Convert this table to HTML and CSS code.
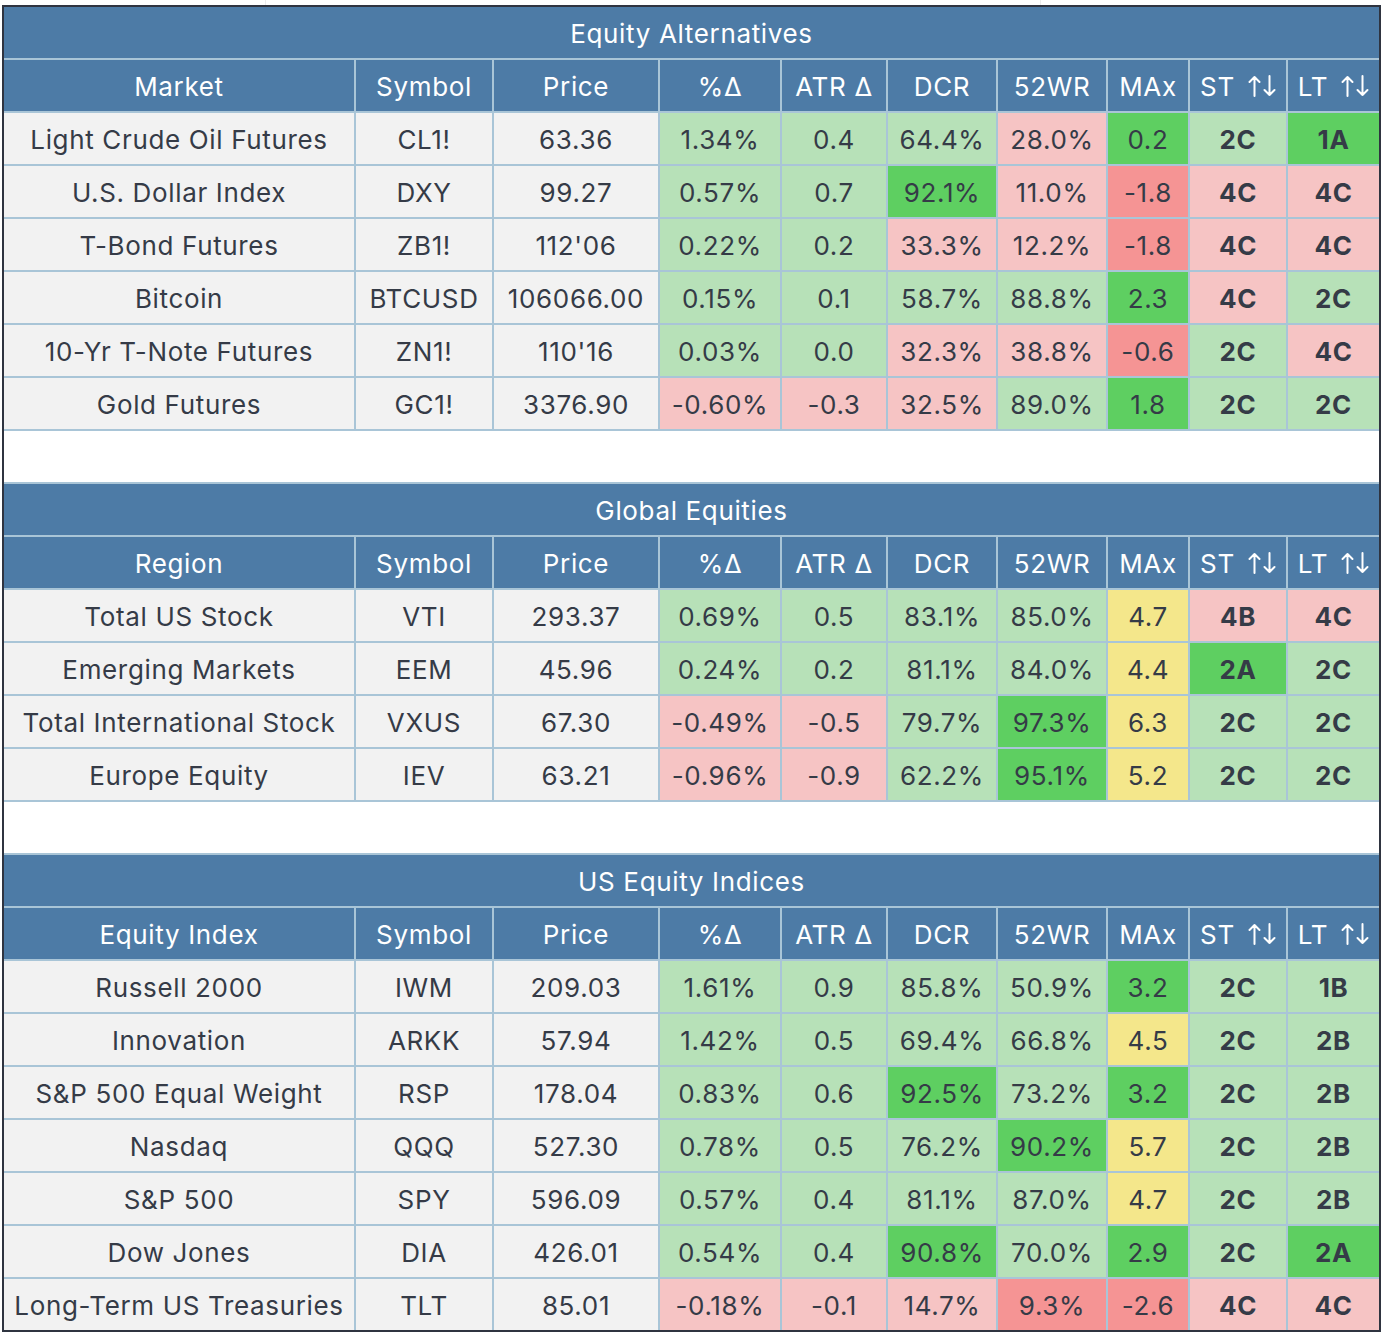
FILE: index.html
```html
<!DOCTYPE html>
<html lang="en">
<head>
<meta charset="utf-8">
<title>Market Dashboard</title>
<link rel="stylesheet" href="styles.css">
</head>
<body>
<div class="board">
  <div class="title">Equity Alternatives</div>
  <div class="th">Market</div><div class="th">Symbol</div><div class="th">Price</div><div class="th">%Δ</div><div class="th">ATR Δ</div><div class="th">DCR</div><div class="th">52WR</div><div class="th">MAx</div><div class="th">ST<svg class="arr" viewBox="0 0 28 22" aria-label="sort"><path d="M6.5 21V2M1.5 7L6.5 2L11.5 7M21.5 1V20M16.5 15L21.5 20L26.5 15"/></svg></div><div class="th last">LT<svg class="arr" viewBox="0 0 28 22" aria-label="sort"><path d="M6.5 21V2M1.5 7L6.5 2L11.5 7M21.5 1V20M16.5 15L21.5 20L26.5 15"/></svg></div>

  <div class="td n">Light Crude Oil Futures</div><div class="td n">CL1!</div><div class="td n">63.36</div><div class="td g">1.34%</div><div class="td g">0.4</div><div class="td g">64.4%</div><div class="td p">28.0%</div><div class="td G">0.2</div><div class="td g b">2C</div><div class="td G b last">1A</div>
  <div class="td n">U.S. Dollar Index</div><div class="td n">DXY</div><div class="td n">99.27</div><div class="td g">0.57%</div><div class="td g">0.7</div><div class="td G">92.1%</div><div class="td p">11.0%</div><div class="td r">-1.8</div><div class="td p b">4C</div><div class="td p b last">4C</div>
  <div class="td n">T-Bond Futures</div><div class="td n">ZB1!</div><div class="td n">112'06</div><div class="td g">0.22%</div><div class="td g">0.2</div><div class="td p">33.3%</div><div class="td p">12.2%</div><div class="td r">-1.8</div><div class="td p b">4C</div><div class="td p b last">4C</div>
  <div class="td n">Bitcoin</div><div class="td n">BTCUSD</div><div class="td n">106066.00</div><div class="td g">0.15%</div><div class="td g">0.1</div><div class="td g">58.7%</div><div class="td g">88.8%</div><div class="td G">2.3</div><div class="td p b">4C</div><div class="td g b last">2C</div>
  <div class="td n">10-Yr T-Note Futures</div><div class="td n">ZN1!</div><div class="td n">110'16</div><div class="td g">0.03%</div><div class="td g">0.0</div><div class="td p">32.3%</div><div class="td p">38.8%</div><div class="td r">-0.6</div><div class="td g b">2C</div><div class="td p b last">4C</div>
  <div class="td n">Gold Futures</div><div class="td n">GC1!</div><div class="td n">3376.90</div><div class="td p">-0.60%</div><div class="td p">-0.3</div><div class="td p">32.5%</div><div class="td g">89.0%</div><div class="td G">1.8</div><div class="td g b">2C</div><div class="td g b last">2C</div>

  <div class="spacer"></div>

  <div class="title">Global Equities</div>
  <div class="th">Region</div><div class="th">Symbol</div><div class="th">Price</div><div class="th">%Δ</div><div class="th">ATR Δ</div><div class="th">DCR</div><div class="th">52WR</div><div class="th">MAx</div><div class="th">ST<svg class="arr" viewBox="0 0 28 22" aria-label="sort"><path d="M6.5 21V2M1.5 7L6.5 2L11.5 7M21.5 1V20M16.5 15L21.5 20L26.5 15"/></svg></div><div class="th last">LT<svg class="arr" viewBox="0 0 28 22" aria-label="sort"><path d="M6.5 21V2M1.5 7L6.5 2L11.5 7M21.5 1V20M16.5 15L21.5 20L26.5 15"/></svg></div>

  <div class="td n">Total US Stock</div><div class="td n">VTI</div><div class="td n">293.37</div><div class="td g">0.69%</div><div class="td g">0.5</div><div class="td g">83.1%</div><div class="td g">85.0%</div><div class="td y">4.7</div><div class="td p b">4B</div><div class="td p b last">4C</div>
  <div class="td n">Emerging Markets</div><div class="td n">EEM</div><div class="td n">45.96</div><div class="td g">0.24%</div><div class="td g">0.2</div><div class="td g">81.1%</div><div class="td g">84.0%</div><div class="td y">4.4</div><div class="td G b">2A</div><div class="td g b last">2C</div>
  <div class="td n">Total International Stock</div><div class="td n">VXUS</div><div class="td n">67.30</div><div class="td p">-0.49%</div><div class="td p">-0.5</div><div class="td g">79.7%</div><div class="td G">97.3%</div><div class="td y">6.3</div><div class="td g b">2C</div><div class="td g b last">2C</div>
  <div class="td n">Europe Equity</div><div class="td n">IEV</div><div class="td n">63.21</div><div class="td p">-0.96%</div><div class="td p">-0.9</div><div class="td g">62.2%</div><div class="td G">95.1%</div><div class="td y">5.2</div><div class="td g b">2C</div><div class="td g b last">2C</div>

  <div class="spacer"></div>

  <div class="title">US Equity Indices</div>
  <div class="th">Equity Index</div><div class="th">Symbol</div><div class="th">Price</div><div class="th">%Δ</div><div class="th">ATR Δ</div><div class="th">DCR</div><div class="th">52WR</div><div class="th">MAx</div><div class="th">ST<svg class="arr" viewBox="0 0 28 22" aria-label="sort"><path d="M6.5 21V2M1.5 7L6.5 2L11.5 7M21.5 1V20M16.5 15L21.5 20L26.5 15"/></svg></div><div class="th last">LT<svg class="arr" viewBox="0 0 28 22" aria-label="sort"><path d="M6.5 21V2M1.5 7L6.5 2L11.5 7M21.5 1V20M16.5 15L21.5 20L26.5 15"/></svg></div>

  <div class="td n">Russell 2000</div><div class="td n">IWM</div><div class="td n">209.03</div><div class="td g">1.61%</div><div class="td g">0.9</div><div class="td g">85.8%</div><div class="td g">50.9%</div><div class="td G">3.2</div><div class="td g b">2C</div><div class="td g b last">1B</div>
  <div class="td n">Innovation</div><div class="td n">ARKK</div><div class="td n">57.94</div><div class="td g">1.42%</div><div class="td g">0.5</div><div class="td g">69.4%</div><div class="td g">66.8%</div><div class="td y">4.5</div><div class="td g b">2C</div><div class="td g b last">2B</div>
  <div class="td n">S&amp;P 500 Equal Weight</div><div class="td n">RSP</div><div class="td n">178.04</div><div class="td g">0.83%</div><div class="td g">0.6</div><div class="td G">92.5%</div><div class="td g">73.2%</div><div class="td G">3.2</div><div class="td g b">2C</div><div class="td g b last">2B</div>
  <div class="td n">Nasdaq</div><div class="td n">QQQ</div><div class="td n">527.30</div><div class="td g">0.78%</div><div class="td g">0.5</div><div class="td g">76.2%</div><div class="td G">90.2%</div><div class="td y">5.7</div><div class="td g b">2C</div><div class="td g b last">2B</div>
  <div class="td n">S&amp;P 500</div><div class="td n">SPY</div><div class="td n">596.09</div><div class="td g">0.57%</div><div class="td g">0.4</div><div class="td g">81.1%</div><div class="td g">87.0%</div><div class="td y">4.7</div><div class="td g b">2C</div><div class="td g b last">2B</div>
  <div class="td n">Dow Jones</div><div class="td n">DIA</div><div class="td n">426.01</div><div class="td g">0.54%</div><div class="td g">0.4</div><div class="td G">90.8%</div><div class="td g">70.0%</div><div class="td G">2.9</div><div class="td g b">2C</div><div class="td G b last">2A</div>
  <div class="td n end">Long-Term US Treasuries</div><div class="td n end">TLT</div><div class="td n end">85.01</div><div class="td p end">-0.18%</div><div class="td p end">-0.1</div><div class="td p end">14.7%</div><div class="td r end">9.3%</div><div class="td r end">-2.6</div><div class="td p b end">4C</div><div class="td p b last end">4C</div>
</div>
</body>
</html>
```
FILE: styles.css
```css
html, body {
  margin: 0;
  padding: 0;
}
body {
  background-color: #ffffff;
  background-image:
    linear-gradient(#ececec, #ececec),
    linear-gradient(#ececec, #ececec);
  background-size: 1px 100%, 1px 100%;
  background-position: 265px 0, 1040px 0;
  background-repeat: no-repeat;
  padding: 5px 0 0 2px;
  font-family: "Inter", "Noto Sans", "Liberation Sans", sans-serif;
  color: #353b47;
  letter-spacing: 0.65px;
}
.board {
  display: grid;
  grid-template-columns: 352px 138px 166px 122px 106px 110px 110px 82px 98px 91px;
  width: max-content;
  border: 2px solid #2f3440;
  background: #ffffff;
}
.title, .th, .td, .spacer {
  box-sizing: border-box;
  height: 53px;
  border-bottom: 2px solid #a9c5d7;
  display: flex;
  align-items: center;
  justify-content: center;
  font-size: 26px;
  white-space: nowrap;
  padding-top: 1px;
}
.title, .spacer {
  grid-column: 1 / -1;
}
.title, .th {
  background: #4d7ba6;
  color: #ffffff;
}
.th, .td {
  border-right: 2px solid #a9c5d7;
}
.th.last, .td.last {
  border-right: none;
}
.td.end {
  border-bottom: none;
  height: 51px;
}
.spacer { background: #ffffff; }
.arr {
  width: 28px;
  height: 22px;
  margin-left: 13px;
  margin-top: -1px;
  fill: none;
  stroke: #ffffff;
  stroke-width: 2;
  stroke-linecap: round;
  stroke-linejoin: round;
}
.n { background: #f2f2f2; }
.g { background: #b7e1b8; }
.G { background: #5ecf61; }
.p { background: #f6c4c4; }
.r { background: #f59494; }
.y { background: #f4e78b; }
.b { font-weight: 700; }
```
